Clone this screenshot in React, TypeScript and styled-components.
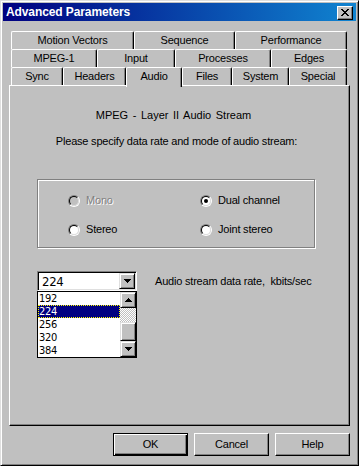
import React from 'react';
import styled, { createGlobalStyle } from 'styled-components';

const GlobalStyle = createGlobalStyle`
  html, body { margin: 0; padding: 0; background: #c0c0c0; }
  body {
    font-family: "Liberation Sans", Arial, sans-serif;
    font-size: 11px;
    line-height: 13px;
    letter-spacing: -0.2px;
    color: #000;
  }
  * { box-sizing: border-box; }
`;

const Window = styled.div`
  width: 359px;
  height: 466px;
  background: #c0c0c0;
  border: 1px solid;
  border-color: #dfdfdf #000 #000 #dfdfdf;
  box-shadow: inset 1px 1px #fff, inset -1px -1px #808080;
  padding: 2px;
  display: flex;
  flex-direction: column;
`;

const TitleBar = styled.div`
  height: 18px;
  flex: none;
  background: linear-gradient(to right, #000080, #1084d0);
  display: flex;
  align-items: center;
  justify-content: space-between;
  padding: 0 3px 0 3px;
`;

const TitleText = styled.span`
  color: #fff;
  font-weight: bold;
  font-size: 12px;
  letter-spacing: -0.1px;
`;

const CloseButton = styled.div`
  width: 16px;
  height: 14px;
  background: #c0c0c0;
  border: 1px solid;
  border-color: #fff #000 #000 #fff;
  box-shadow: inset -1px -1px #808080;
  display: flex;
  align-items: center;
  justify-content: center;
  margin-top: 1px;
`;

const Body = styled.div`
  flex: 1;
  display: flex;
  flex-direction: column;
  padding: 10px 6px 7px 6px;
`;

const TabRow = styled.div`
  display: flex;
  height: 18px;
  margin: 0 3px 0 2px;
  align-items: flex-end;
`;

const Tab = styled.div<{ $w: number; $sel?: boolean }>`
  width: ${(p) => p.$w}px;
  height: ${(p) => (p.$sel ? 20 : 18)}px;
  margin-bottom: ${(p) => (p.$sel ? -2 : 0)}px;
  padding-bottom: ${(p) => (p.$sel ? 3 : 0)}px;
  position: relative;
  z-index: ${(p) => (p.$sel ? 2 : 0)};
  flex: none;
  background: #c0c0c0;
  border-left: 1px solid #fff;
  border-top: 1px solid #fff;
  border-right: 1px solid #000;
  border-top-left-radius: 2px;
  border-top-right-radius: 2px;
  box-shadow: inset -1px 0 #808080;
  display: flex;
  align-items: center;
  justify-content: center;
  white-space: nowrap;
`;

const Panel = styled.div`
  height: 341px;
  flex: none;
  border: 1px solid;
  border-color: #fff #000 #000 #fff;
  box-shadow: inset -1px -1px #808080;
  padding: 23px 0 0 27px;
`;

const Content = styled.div`
  width: 279px;
  display: flex;
  flex-direction: column;
`;

const Heading = styled.div<{ $mt?: number; $shift?: number }>`
  text-align: center;
  margin-top: ${(p) => p.$mt ?? 0}px;
  padding-right: ${(p) => p.$shift ?? 0}px;
`;

const TitleHeading = styled(Heading)`
  letter-spacing: 0;
  word-spacing: 1.5px;
`;

const GroupBox = styled.div`
  margin-top: 31px;
  width: 278px;
  height: 69px;
  border: 1px solid #808080;
  box-shadow: inset 1px 1px #fff, 1px 1px #fff;
  display: grid;
  grid-template-columns: 132px 1fr;
  grid-auto-rows: 13px;
  row-gap: 16px;
  padding: 14px 0 0 30px;
`;

const RadioItem = styled.label<{ $disabled?: boolean }>`
  display: flex;
  align-items: center;
  gap: 6px;
  color: ${(p) => (p.$disabled ? '#808080' : '#000')};
  text-shadow: ${(p) => (p.$disabled ? '1px 1px 0 #fff' : 'none')};
`;

const RadioCircle = styled.span`
  width: 12px;
  height: 12px;
  border-radius: 50%;
  border: 1px solid;
  border-color: #808080 #fff #fff #808080;
  display: flex;
  flex: none;
`;

const RadioInner = styled.span<{ $disabled?: boolean }>`
  flex: 1;
  border-radius: 50%;
  border: 1px solid;
  border-color: #000 #dfdfdf #dfdfdf #000;
  background: ${(p) => (p.$disabled ? '#c0c0c0' : '#fff')};
  display: flex;
  align-items: center;
  justify-content: center;
`;

const RadioDot = styled.span`
  width: 4px;
  height: 4px;
  border-radius: 50%;
  background: #000;
`;

const ComboRow = styled.div`
  margin-top: 23px;
  display: flex;
  align-items: flex-start;
  gap: 18px;
`;

const ComboColumn = styled.div`
  width: 100px;
  display: flex;
  flex-direction: column;
`;

const ComboBox = styled.div`
  height: 20px;
  background: #fff;
  border: 1px solid;
  border-color: #808080 #fff #fff #808080;
  box-shadow: inset 1px 1px #000, inset -1px -1px #dfdfdf;
  padding: 1px;
  display: flex;
  align-items: stretch;
`;

const ValueText = styled.span<{ $size?: number }>`
  font-family: "DejaVu Sans Condensed", "Liberation Sans", sans-serif;
  font-size: ${(p) => p.$size ?? 13}px;
  letter-spacing: -0.3px;
`;

const ComboText = styled(ValueText)`
  flex: 1;
  padding-left: 3px;
  display: flex;
  align-items: center;
`;

const ArrowButton = styled.div`
  width: 16px;
  height: 16px;
  flex: none;
  background: #c0c0c0;
  border: 1px solid;
  border-color: #dfdfdf #000 #000 #dfdfdf;
  box-shadow: inset 1px 1px #fff, inset -1px -1px #808080;
  display: flex;
  align-items: center;
  justify-content: center;
`;

const ComboLabel = styled.span`
  white-space: pre;
  line-height: 20px;
`;

const ListBox = styled.div`
  height: 67px;
  background: #fff;
  border: 1px solid #000;
  display: flex;
`;

const ListItems = styled.div`
  flex: 1;
  display: flex;
  flex-direction: column;
`;

const ListItem = styled(ValueText)<{ $sel?: boolean }>`
  display: block;
  height: 13px;
  line-height: 13px;
  overflow: hidden;
  padding-left: 1px;
  background: ${(p) => (p.$sel ? '#000080' : 'transparent')};
  color: ${(p) => (p.$sel ? '#fff' : '#000')};
  outline: ${(p) => (p.$sel ? '1px dotted #ffff00' : 'none')};
  outline-offset: -1px;
`;

const ScrollBar = styled.div`
  width: 16px;
  flex: none;
  display: flex;
  flex-direction: column;
`;

const ScrollTrack = styled.div<{ $h: number }>`
  height: ${(p) => p.$h}px;
  background: repeating-conic-gradient(#c0c0c0 0 25%, #fff 0 50%) 0 0 / 2px 2px;
`;

const ScrollThumb = styled.div<{ $h: number }>`
  height: ${(p) => p.$h}px;
  background: #c0c0c0;
  border: 1px solid;
  border-color: #dfdfdf #000 #000 #dfdfdf;
  box-shadow: inset 1px 1px #fff, inset -1px -1px #808080;
`;

const ButtonRow = styled.div`
  margin-top: 7px;
  display: flex;
  justify-content: flex-end;
  gap: 6px;
`;

const Button = styled.div<{ $default?: boolean }>`
  width: 75px;
  height: 23px;
  background: #c0c0c0;
  border: 1px solid;
  border-color: ${(p) => (p.$default ? '#000' : '#fff #000 #000 #fff')};
  box-shadow: ${(p) =>
    p.$default
      ? 'inset 1px 1px #fff, inset -1px -1px #000, inset -2px -2px #808080'
      : 'inset -1px -1px #808080'};
  display: flex;
  align-items: center;
  justify-content: center;
`;

const Arrow = ({ up }: { up?: boolean }) => (
  <svg width="7" height="4" viewBox="0 0 7 4">
    <path d={up ? 'M3 0h1v1h1v1h1v1h1v1H0V3h1V2h1V1h1z' : 'M0 0h7v1H6v1H5v1H4v1H3V3H2V2H1V1H0z'} fill="#000" />
  </svg>
);

const rows: { label: string; w: number; sel?: boolean }[][] = [
  [
    { label: 'Motion Vectors', w: 123 },
    { label: 'Sequence', w: 101 },
    { label: 'Performance', w: 112 },
  ],
  [
    { label: 'MPEG-1', w: 86 },
    { label: 'Input', w: 78 },
    { label: 'Processes', w: 96 },
    { label: 'Edges', w: 76 },
  ],
  [
    { label: 'Sync', w: 52 },
    { label: 'Headers', w: 63 },
    { label: 'Audio', w: 56, sel: true },
    { label: 'Files', w: 50 },
    { label: 'System', w: 57 },
    { label: 'Special', w: 58 },
  ],
];

const radios = [
  { label: 'Mono', disabled: true },
  { label: 'Dual channel', checked: true },
  { label: 'Stereo' },
  { label: 'Joint stereo' },
];

const rates = ['192', '224', '256', '320', '384'];

export default function App() {
  return (
    <>
      <GlobalStyle />
      <Window>
        <TitleBar>
          <TitleText>Advanced Parameters</TitleText>
          <CloseButton>
            <svg width="8" height="7" viewBox="0 0 8 7">
              <path
                d="M0 0h2v1h1v1h2V1h1V0h2v1H7v1H6v1H5v1h1v1h1v1h1v1H6V6H5V5H3v1H2v1H0V6h1V5h1V4h1V3H2V2H1V1H0z"
                fill="#000"
              />
            </svg>
          </CloseButton>
        </TitleBar>
        <Body>
          {rows.map((row, i) => (
            <TabRow key={i}>
              {row.map((t) => (
                <Tab key={t.label} $w={t.w} $sel={t.sel}>
                  {t.label}
                </Tab>
              ))}
            </TabRow>
          ))}
          <Panel>
            <Content>
              <TitleHeading $shift={6}>MPEG - Layer II Audio Stream</TitleHeading>
              <Heading $mt={13}>Please specify data rate and mode of audio stream:</Heading>
              <GroupBox>
                {radios.map((r) => (
                  <RadioItem key={r.label} $disabled={r.disabled}>
                    <RadioCircle>
                      <RadioInner $disabled={r.disabled}>{r.checked && <RadioDot />}</RadioInner>
                    </RadioCircle>
                    {r.label}
                  </RadioItem>
                ))}
              </GroupBox>
              <ComboRow>
                <ComboColumn>
                  <ComboBox>
                    <ComboText>224</ComboText>
                    <ArrowButton>
                      <Arrow />
                    </ArrowButton>
                  </ComboBox>
                  <ListBox>
                    <ListItems>
                      {rates.map((r) => (
                        <ListItem key={r} $size={11} $sel={r === '224'}>
                          {r}
                        </ListItem>
                      ))}
                    </ListItems>
                    <ScrollBar>
                      <ArrowButton>
                        <Arrow up />
                      </ArrowButton>
                      <ScrollTrack $h={14} />
                      <ScrollThumb $h={19} />
                      <ArrowButton>
                        <Arrow />
                      </ArrowButton>
                    </ScrollBar>
                  </ListBox>
                </ComboColumn>
                <ComboLabel>Audio stream data rate,  kbits/sec</ComboLabel>
              </ComboRow>
            </Content>
          </Panel>
          <ButtonRow>
            <Button $default>OK</Button>
            <Button>Cancel</Button>
            <Button>Help</Button>
          </ButtonRow>
        </Body>
      </Window>
    </>
  );
}
